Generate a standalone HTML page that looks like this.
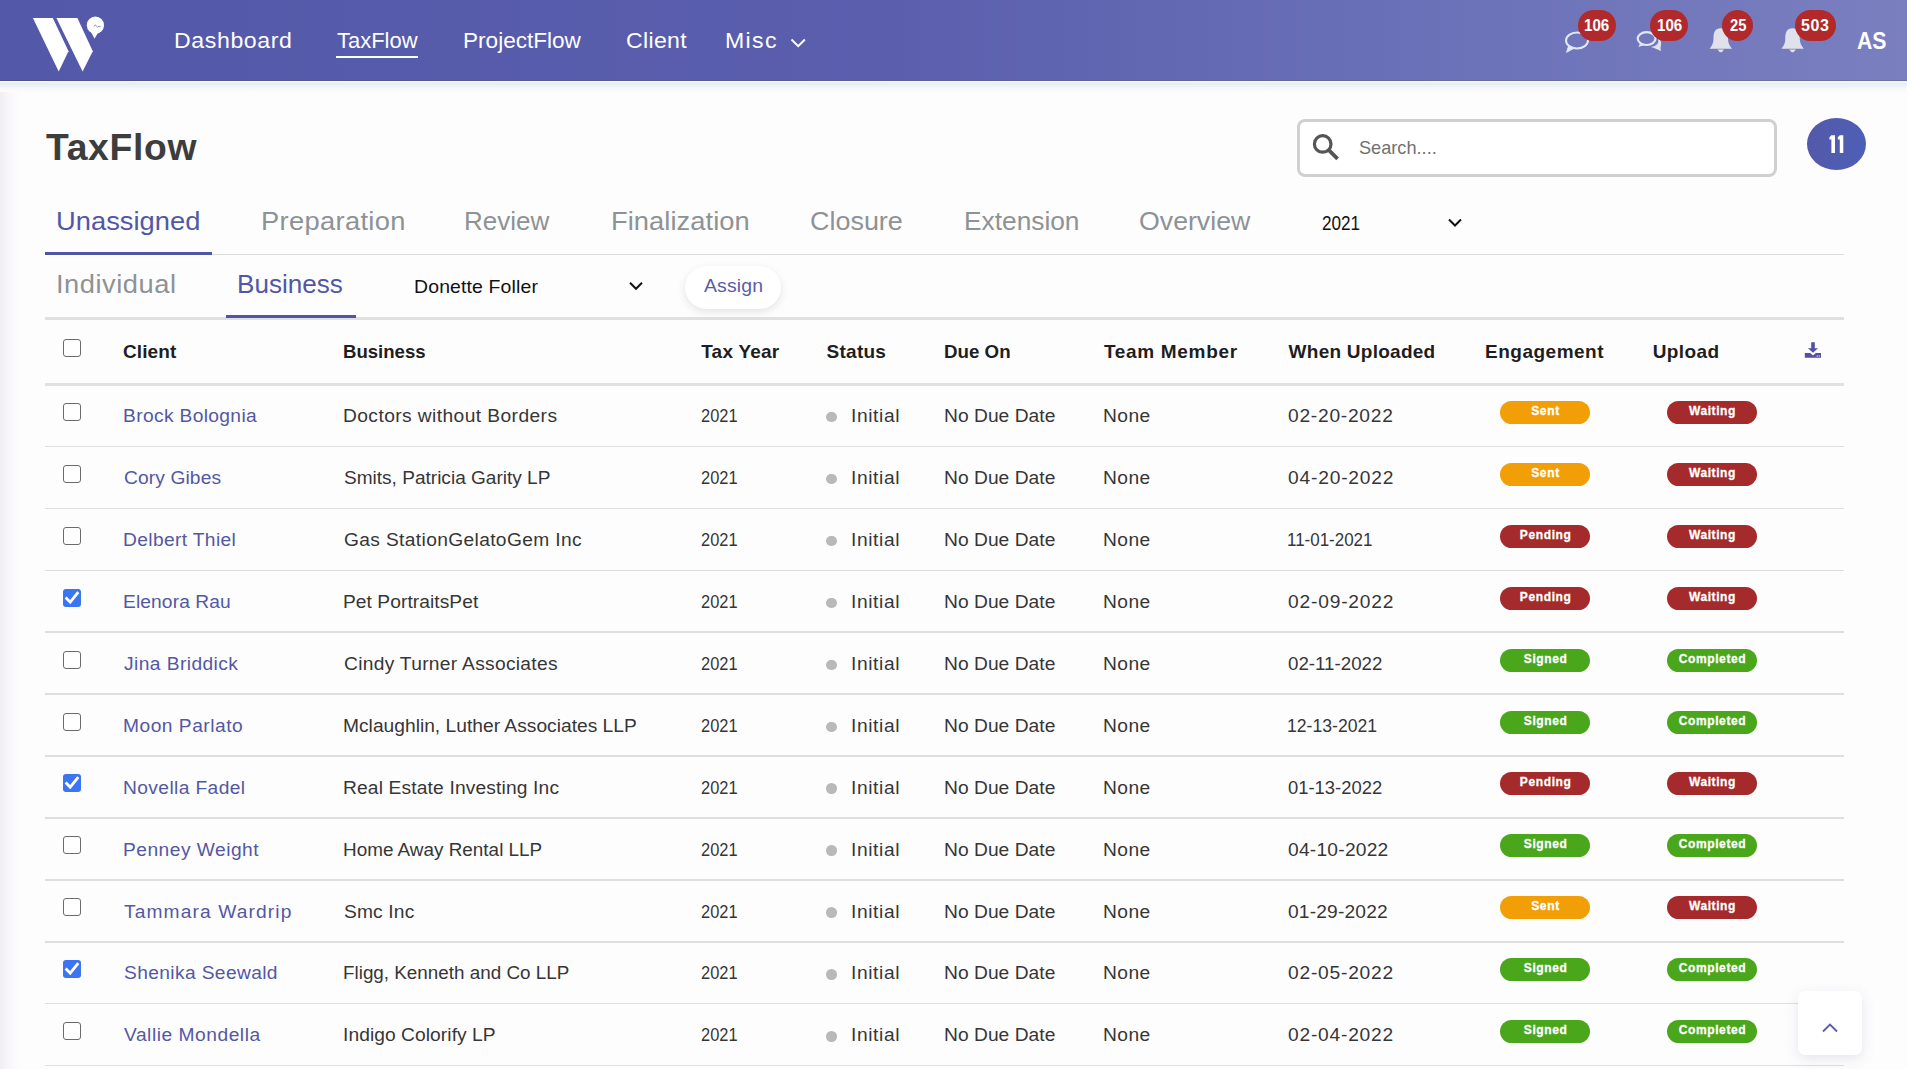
<!DOCTYPE html><html><head><meta charset="utf-8"><style>
*{margin:0;padding:0;box-sizing:border-box}
html,body{width:1907px;height:1069px;overflow:hidden;background:#fefdfe;font-family:"Liberation Sans",sans-serif;position:relative}
.t{position:absolute;white-space:nowrap;font-family:"Liberation Sans",sans-serif}
.abs{position:absolute}
#nav{position:absolute;left:0;top:0;width:1907px;height:81px;background:linear-gradient(to right,#5358a8 0%,#5a5ead 46%,#6a70b7 73%,#7a7fc0 100%)}
#navsh{position:absolute;left:0;top:81px;width:1907px;height:11px;background:linear-gradient(to bottom,#f6fbfb 0px,#e7efeb 2.5px,#eef3f9 5px,#f6f7f9 7.5px,#fefdfe 11px)}
#navln{position:absolute;left:0;top:80px;width:1907px;height:1px;background:linear-gradient(to right,#4f528c,#5d6097 50%,#6f739f)}
#leftsh{position:absolute;left:0;top:92px;width:20px;height:977px;background:linear-gradient(to right,#f1eff3,#f8f6f9 45%,#fefdfe)}
.badge{position:absolute;width:90px;height:23px;border-radius:12px}
.nb{position:absolute;height:31px;top:9.9px;border-radius:16px;background:#b1292b}
.cb{position:absolute;width:18px;height:18px;border:1.6px solid #6b6b6b;border-radius:3px;background:#fff}
.cbk{position:absolute;width:18px;height:18px;border-radius:3px;background:#3b75f2}
.cbk svg{position:absolute;left:0;top:0}
.dot{position:absolute;width:10.5px;height:10.5px;border-radius:50%;background:#b9b9bb}
.rl{position:absolute;left:45px;width:1799px;height:1.4px;background:#dedee0}
</style></head><body>
<div id="leftsh"></div><div id="nav"></div><div id="navln"></div><div id="navsh"></div>
<svg class="abs" style="left:0;top:0" width="120" height="81" viewBox="0 0 120 81">
<path d="M32.9 17.9 L52.8 17.9 L68.5 51.3 L58.7 71.6 Z" fill="#fff"/>
<path d="M56.4 17.9 L77.4 17.9 L92.8 51.3 L82.6 71.6 Z" fill="#fff"/>
<circle cx="95.4" cy="25.2" r="8.6" fill="#fff"/>
<path d="M90 30 L94.5 38.8 L99 31 Z" fill="#fff"/>
<path d="M94 26.5 q1.2 -3 2.4 -0.5 q1 2 2.5 0.4 l1.8 0" fill="none" stroke="#5358a9" stroke-width="0.7"/>
</svg>
<div class="abs" style="left:336px;top:56px;width:82px;height:2.2px;background:#fff"></div>
<svg class="abs" style="left:788px;top:36px" width="20" height="14" viewBox="0 0 20 14"><path d="M3.5 3.5 L10.2 10.2 L16.9 3.5" fill="none" stroke="#fff" stroke-width="2"/></svg>
<svg class="abs" style="left:1560px;top:25px" width="110" height="32" viewBox="0 0 110 32">
<ellipse cx="17" cy="15.5" rx="11" ry="8" fill="none" stroke="#e3e8f6" stroke-width="2"/>
<path d="M8.8 20.5 L6.6 27.3 L13.8 23.3" fill="#e3e8f6" stroke="#e3e8f6" stroke-width="1"/>
<ellipse cx="86.6" cy="13.6" rx="8.9" ry="6.4" fill="none" stroke="#e3e8f6" stroke-width="2.2"/>
<path d="M80.5 17.5 L78.4 22 L84.5 20" fill="#e3e8f6"/>
<path d="M91 22 Q100 21 98 13 Q102 16 101 20 L100.5 23 L101 26 L94 23 Z" fill="#dfe3ec"/>
</svg>
<svg class="abs" style="left:1700px;top:20px" width="120" height="40" viewBox="0 0 120 40">
<path d="M20.8 8.3 C14 8.3 13.5 14 13.5 19 C13.5 23 12 25.5 9.6 28.8 L32 28.8 C29.6 25.5 28 23 28 19 C28 14 27.5 8.3 20.8 8.3 Z" fill="#dfe2ea"/>
<path d="M17.5 29.5 Q20.8 35 24 29.5 Z" fill="#dfe2ea"/>
<path d="M92.6 8.3 C85.8 8.3 85.3 14 85.3 19 C85.3 23 83.8 25.5 81.4 28.8 L103.8 28.8 C101.4 25.5 99.8 23 99.8 19 C99.8 14 99.3 8.3 92.6 8.3 Z" fill="#dfe2ea"/>
<path d="M89.3 29.5 Q92.6 35 95.8 29.5 Z" fill="#dfe2ea"/>
</svg>
<div class="nb" style="left:1577.8px;width:38px"></div>
<div class="nb" style="left:1650.4px;width:37.5px"></div>
<div class="nb" style="left:1722.3px;width:30.5px"></div>
<div class="nb" style="left:1794.5px;width:41.2px"></div>
<div class="abs" style="left:1297px;top:119px;width:480px;height:58px;border:3px solid #d0d0d4;border-radius:8px;background:#fff"></div>
<svg class="abs" style="left:1305px;top:126px" width="44" height="44" viewBox="0 0 44 44"><circle cx="17.7" cy="17.9" r="8.3" fill="none" stroke="#555" stroke-width="3.2"/><path d="M23.6 23.8 L32.6 32.8" stroke="#555" stroke-width="3.8" stroke-linecap="butt"/></svg>
<div class="abs" style="left:1807px;top:118px;width:59px;height:52px;border-radius:50%;background:linear-gradient(to right,#5459a9,#4d5fb6)"></div>
<div class="abs" style="left:45px;top:254px;width:1799px;height:1.2px;background:#dcdcdf"></div>
<div class="abs" style="left:45px;top:252px;width:167px;height:3px;background:#4f55a3"></div>
<svg class="abs" style="left:1444px;top:215px" width="22" height="16" viewBox="0 0 22 16"><path d="M5 4.5 L11 10.5 L17 4.5" fill="none" stroke="#111" stroke-width="2"/></svg>
<div class="abs" style="left:45px;top:317px;width:1799px;height:2.5px;background:#e0e0e2"></div>
<div class="abs" style="left:226px;top:315px;width:130px;height:3px;background:#5055a4"></div>
<svg class="abs" style="left:626px;top:279px" width="20" height="14" viewBox="0 0 20 14"><path d="M4 3.8 L10 9.8 L16 3.8" fill="none" stroke="#111" stroke-width="2"/></svg>
<div class="abs" style="left:685px;top:265.5px;width:96px;height:43px;border-radius:22px;background:#fff;box-shadow:0 3px 8px rgba(0,0,0,0.10)"></div>
<div class="cb" style="left:63px;top:339.3px"></div>
<svg class="abs" style="left:1795px;top:335px" width="35" height="30" viewBox="0 0 35 30"><path d="M16.2 7.3 H19.8 V13.3 H23 L18 17.8 L12.9 13.3 H16.2 Z" fill="#5350a6"/><path d="M9.8 18.1 H15.2 L18 20.4 L20.8 18.1 H26 V22.8 H9.8 Z" fill="#5350a6"/><circle cx="22.3" cy="21" r="0.8" fill="#c9c8f2"/><circle cx="24.3" cy="21" r="0.8" fill="#c9c8f2"/></svg>
<div class="abs" style="left:45px;top:383.3px;width:1799px;height:3px;background:#e1e1e3"></div>
<div class="cb" style="left:63px;top:402.90px"></div>
<div class="dot" style="left:826px;top:411.90px"></div>
<div class="rl" style="top:445.70px"></div>
<div class="cb" style="left:63px;top:464.83px"></div>
<div class="dot" style="left:826px;top:473.83px"></div>
<div class="rl" style="top:507.63px"></div>
<div class="cb" style="left:63px;top:526.76px"></div>
<div class="dot" style="left:826px;top:535.76px"></div>
<div class="rl" style="top:569.56px"></div>
<div class="cbk" style="left:63px;top:588.69px"><svg width="18" height="18" viewBox="0 0 18 18"><path d="M3.6 9.6 L7.2 13.2 L14.4 4.2" fill="none" stroke="#fff" stroke-width="2.8" stroke-linecap="square"/></svg></div>
<div class="dot" style="left:826px;top:597.69px"></div>
<div class="rl" style="top:631.49px"></div>
<div class="cb" style="left:63px;top:650.62px"></div>
<div class="dot" style="left:826px;top:659.62px"></div>
<div class="rl" style="top:693.42px"></div>
<div class="cb" style="left:63px;top:712.55px"></div>
<div class="dot" style="left:826px;top:721.55px"></div>
<div class="rl" style="top:755.35px"></div>
<div class="cbk" style="left:63px;top:774.48px"><svg width="18" height="18" viewBox="0 0 18 18"><path d="M3.6 9.6 L7.2 13.2 L14.4 4.2" fill="none" stroke="#fff" stroke-width="2.8" stroke-linecap="square"/></svg></div>
<div class="dot" style="left:826px;top:783.48px"></div>
<div class="rl" style="top:817.28px"></div>
<div class="cb" style="left:63px;top:836.41px"></div>
<div class="dot" style="left:826px;top:845.41px"></div>
<div class="rl" style="top:879.21px"></div>
<div class="cb" style="left:63px;top:898.34px"></div>
<div class="dot" style="left:826px;top:907.34px"></div>
<div class="rl" style="top:941.14px"></div>
<div class="cbk" style="left:63px;top:960.27px"><svg width="18" height="18" viewBox="0 0 18 18"><path d="M3.6 9.6 L7.2 13.2 L14.4 4.2" fill="none" stroke="#fff" stroke-width="2.8" stroke-linecap="square"/></svg></div>
<div class="dot" style="left:826px;top:969.27px"></div>
<div class="rl" style="top:1003.07px"></div>
<div class="cb" style="left:63px;top:1022.20px"></div>
<div class="dot" style="left:826px;top:1031.20px"></div>
<div class="rl" style="top:1065.00px"></div>
<div class="t" style="left:173.85px;top:29.90px;font-size:22px;line-height:22px;font-weight:400;color:#fff;letter-spacing:0.588px;transform:scaleX(1.05);transform-origin:0 0">Dashboard</div>
<div class="t" style="left:337.00px;top:29.90px;font-size:22px;line-height:22px;font-weight:400;color:#fff;letter-spacing:0.000px;transform:scaleX(0.9988010056081994);transform-origin:0 0">TaxFlow</div>
<div class="t" style="left:463.47px;top:29.90px;font-size:22px;line-height:22px;font-weight:400;color:#fff;letter-spacing:0.000px;transform:scaleX(1.0260257431338797);transform-origin:0 0">ProjectFlow</div>
<div class="t" style="left:626.45px;top:29.90px;font-size:22px;line-height:22px;font-weight:400;color:#fff;letter-spacing:0.307px;transform:scaleX(1.05);transform-origin:0 0">Client</div>
<div class="t" style="left:725.45px;top:29.90px;font-size:22px;line-height:22px;font-weight:400;color:#fff;letter-spacing:1.294px;transform:scaleX(1.05);transform-origin:0 0">Misc</div>
<div class="t" style="left:1857.00px;top:30.00px;font-size:23px;line-height:23px;font-weight:700;color:#fff;letter-spacing:0.000px;transform:scaleX(0.92376229976675);transform-origin:0 0">AS</div>
<div class="t" style="left:1584.05px;top:17.90px;font-size:16px;line-height:16px;font-weight:700;color:#fff;letter-spacing:0.000px;transform:scaleX(0.94585099939431);transform-origin:0 0">106</div>
<div class="t" style="left:1656.55px;top:17.90px;font-size:16px;line-height:16px;font-weight:700;color:#fff;letter-spacing:0.000px;transform:scaleX(0.94585099939431);transform-origin:0 0">106</div>
<div class="t" style="left:1729.50px;top:17.90px;font-size:16px;line-height:16px;font-weight:700;color:#fff;letter-spacing:0.000px;transform:scaleX(0.9218681798341336);transform-origin:0 0">25</div>
<div class="t" style="left:1801.00px;top:17.90px;font-size:16px;line-height:16px;font-weight:700;color:#fff;letter-spacing:0.602px">503</div>
<div class="t" style="left:46.00px;top:129.00px;font-size:37.3px;line-height:37.3px;font-weight:600;color:#3d3d3d;letter-spacing:0.679px">TaxFlow</div>
<div class="t" style="left:1358.50px;top:137.80px;font-size:19px;line-height:19px;font-weight:400;color:#717171;letter-spacing:0.000px;transform:scaleX(0.9558066326655116);transform-origin:0 0">Search....</div>
<div class="t" style="left:56.20px;top:208.30px;font-size:26px;line-height:26px;font-weight:400;color:#5257a5;letter-spacing:0.016px;transform:scaleX(1.05);transform-origin:0 0">Unassigned</div>
<div class="t" style="left:260.60px;top:208.30px;font-size:26px;line-height:26px;font-weight:400;color:#8d9295;letter-spacing:0.314px;transform:scaleX(1.05);transform-origin:0 0">Preparation</div>
<div class="t" style="left:464.40px;top:208.30px;font-size:26px;line-height:26px;font-weight:400;color:#8d9295;letter-spacing:-0.000px;transform:scaleX(1.0015255744302498);transform-origin:0 0">Review</div>
<div class="t" style="left:611.10px;top:208.30px;font-size:26px;line-height:26px;font-weight:400;color:#8d9295;letter-spacing:0.056px;transform:scaleX(1.05);transform-origin:0 0">Finalization</div>
<div class="t" style="left:810.26px;top:208.30px;font-size:26px;line-height:26px;font-weight:400;color:#8d9295;letter-spacing:0.000px;transform:scaleX(1.0359594885091867);transform-origin:0 0">Closure</div>
<div class="t" style="left:963.98px;top:208.30px;font-size:26px;line-height:26px;font-weight:400;color:#8d9295;letter-spacing:-0.000px;transform:scaleX(1.011545347903933);transform-origin:0 0">Extension</div>
<div class="t" style="left:1139.47px;top:208.30px;font-size:26px;line-height:26px;font-weight:400;color:#8d9295;letter-spacing:-0.000px;transform:scaleX(1.0271604938271606);transform-origin:0 0">Overview</div>
<div class="t" style="left:1322.30px;top:214.40px;font-size:19.5px;line-height:19.5px;font-weight:400;color:#111;letter-spacing:-0.012px;transform:scaleX(0.88);transform-origin:0 0">2021</div>
<div class="t" style="left:55.80px;top:270.80px;font-size:26px;line-height:26px;font-weight:400;color:#8d9295;letter-spacing:0.494px;transform:scaleX(1.05);transform-origin:0 0">Individual</div>
<div class="t" style="left:237.19px;top:270.80px;font-size:26px;line-height:26px;font-weight:400;color:#5257a5;letter-spacing:0.000px;transform:scaleX(1.0029174765526223);transform-origin:0 0">Business</div>
<div class="t" style="left:413.65px;top:278.00px;font-size:18.5px;line-height:18.5px;font-weight:400;color:#111;letter-spacing:0.140px;transform:scaleX(1.05);transform-origin:0 0">Donette Foller</div>
<div class="t" style="left:704.10px;top:277.00px;font-size:18.5px;line-height:18.5px;font-weight:400;color:#5a5ca6;letter-spacing:0.133px;transform:scaleX(1.05);transform-origin:0 0">Assign</div>
<div class="t" style="left:123.00px;top:342.10px;font-size:19px;line-height:19px;font-weight:700;color:#1e1e1e;letter-spacing:0.090px">Client</div>
<div class="t" style="left:343.32px;top:342.10px;font-size:19px;line-height:19px;font-weight:700;color:#1e1e1e;letter-spacing:0.000px;transform:scaleX(0.9781384529313032);transform-origin:0 0">Business</div>
<div class="t" style="left:701.20px;top:342.10px;font-size:19px;line-height:19px;font-weight:700;color:#1e1e1e;letter-spacing:0.233px">Tax Year</div>
<div class="t" style="left:826.60px;top:342.10px;font-size:19px;line-height:19px;font-weight:700;color:#1e1e1e;letter-spacing:0.240px">Status</div>
<div class="t" style="left:944.01px;top:342.10px;font-size:19px;line-height:19px;font-weight:700;color:#1e1e1e;letter-spacing:0.000px;transform:scaleX(0.9855703381234776);transform-origin:0 0">Due On</div>
<div class="t" style="left:1104.00px;top:342.10px;font-size:19px;line-height:19px;font-weight:700;color:#1e1e1e;letter-spacing:0.674px">Team Member</div>
<div class="t" style="left:1288.60px;top:342.10px;font-size:19px;line-height:19px;font-weight:700;color:#1e1e1e;letter-spacing:0.255px">When Uploaded</div>
<div class="t" style="left:1485.00px;top:342.10px;font-size:19px;line-height:19px;font-weight:700;color:#1e1e1e;letter-spacing:0.501px">Engagement</div>
<div class="t" style="left:1652.70px;top:342.10px;font-size:19px;line-height:19px;font-weight:700;color:#1e1e1e;letter-spacing:0.424px">Upload</div>
<div class="t" style="left:122.55px;top:407.10px;font-size:18.3px;line-height:18.3px;font-weight:400;color:#5358a4;letter-spacing:0.335px;transform:scaleX(1.05);transform-origin:0 0">Brock Bolognia</div>
<div class="t" style="left:343.15px;top:407.10px;font-size:18.3px;line-height:18.3px;font-weight:400;color:#363636;letter-spacing:0.397px;transform:scaleX(1.05);transform-origin:0 0">Doctors without Borders</div>
<div class="t" style="left:701.20px;top:407.10px;font-size:18.3px;line-height:18.3px;font-weight:400;color:#363636;letter-spacing:0.000px;transform:scaleX(0.8987325872497691);transform-origin:0 0">2021</div>
<div class="t" style="left:851.25px;top:407.10px;font-size:18.3px;line-height:18.3px;font-weight:400;color:#363636;letter-spacing:0.580px;transform:scaleX(1.05);transform-origin:0 0">Initial</div>
<div class="t" style="left:943.85px;top:407.10px;font-size:18.3px;line-height:18.3px;font-weight:400;color:#363636;letter-spacing:0.034px;transform:scaleX(1.05);transform-origin:0 0">No Due Date</div>
<div class="t" style="left:1102.95px;top:407.10px;font-size:18.3px;line-height:18.3px;font-weight:400;color:#363636;letter-spacing:0.424px;transform:scaleX(1.05);transform-origin:0 0">None</div>
<div class="t" style="left:1288.20px;top:407.10px;font-size:18.3px;line-height:18.3px;font-weight:400;color:#363636;letter-spacing:0.708px;transform:scaleX(1.05);transform-origin:0 0">02-20-2022</div>
<div class="t" style="left:123.60px;top:469.03px;font-size:18.3px;line-height:18.3px;font-weight:400;color:#5358a4;letter-spacing:0.110px;transform:scaleX(1.05);transform-origin:0 0">Cory Gibes</div>
<div class="t" style="left:344.20px;top:469.03px;font-size:18.3px;line-height:18.3px;font-weight:400;color:#363636;letter-spacing:0.000px;transform:scaleX(1.041934943154175);transform-origin:0 0">Smits, Patricia Garity LP</div>
<div class="t" style="left:701.20px;top:469.03px;font-size:18.3px;line-height:18.3px;font-weight:400;color:#363636;letter-spacing:0.000px;transform:scaleX(0.8987325872497691);transform-origin:0 0">2021</div>
<div class="t" style="left:851.25px;top:469.03px;font-size:18.3px;line-height:18.3px;font-weight:400;color:#363636;letter-spacing:0.580px;transform:scaleX(1.05);transform-origin:0 0">Initial</div>
<div class="t" style="left:943.85px;top:469.03px;font-size:18.3px;line-height:18.3px;font-weight:400;color:#363636;letter-spacing:0.034px;transform:scaleX(1.05);transform-origin:0 0">No Due Date</div>
<div class="t" style="left:1102.95px;top:469.03px;font-size:18.3px;line-height:18.3px;font-weight:400;color:#363636;letter-spacing:0.424px;transform:scaleX(1.05);transform-origin:0 0">None</div>
<div class="t" style="left:1288.20px;top:469.03px;font-size:18.3px;line-height:18.3px;font-weight:400;color:#363636;letter-spacing:0.771px;transform:scaleX(1.05);transform-origin:0 0">04-20-2022</div>
<div class="t" style="left:122.55px;top:530.96px;font-size:18.3px;line-height:18.3px;font-weight:400;color:#5358a4;letter-spacing:0.345px;transform:scaleX(1.05);transform-origin:0 0">Delbert Thiel</div>
<div class="t" style="left:344.20px;top:530.96px;font-size:18.3px;line-height:18.3px;font-weight:400;color:#363636;letter-spacing:0.338px;transform:scaleX(1.05);transform-origin:0 0">Gas StationGelatoGem Inc</div>
<div class="t" style="left:701.20px;top:530.96px;font-size:18.3px;line-height:18.3px;font-weight:400;color:#363636;letter-spacing:0.000px;transform:scaleX(0.8987325872497691);transform-origin:0 0">2021</div>
<div class="t" style="left:851.25px;top:530.96px;font-size:18.3px;line-height:18.3px;font-weight:400;color:#363636;letter-spacing:0.580px;transform:scaleX(1.05);transform-origin:0 0">Initial</div>
<div class="t" style="left:943.85px;top:530.96px;font-size:18.3px;line-height:18.3px;font-weight:400;color:#363636;letter-spacing:0.034px;transform:scaleX(1.05);transform-origin:0 0">No Due Date</div>
<div class="t" style="left:1102.95px;top:530.96px;font-size:18.3px;line-height:18.3px;font-weight:400;color:#363636;letter-spacing:0.424px;transform:scaleX(1.05);transform-origin:0 0">None</div>
<div class="t" style="left:1287.27px;top:530.96px;font-size:18.3px;line-height:18.3px;font-weight:400;color:#363636;letter-spacing:0.000px;transform:scaleX(0.9275922915388632);transform-origin:0 0">11-01-2021</div>
<div class="t" style="left:122.55px;top:592.89px;font-size:18.3px;line-height:18.3px;font-weight:400;color:#5358a4;letter-spacing:0.102px;transform:scaleX(1.05);transform-origin:0 0">Elenora Rau</div>
<div class="t" style="left:343.15px;top:592.89px;font-size:18.3px;line-height:18.3px;font-weight:400;color:#363636;letter-spacing:0.051px;transform:scaleX(1.05);transform-origin:0 0">Pet PortraitsPet</div>
<div class="t" style="left:701.20px;top:592.89px;font-size:18.3px;line-height:18.3px;font-weight:400;color:#363636;letter-spacing:0.000px;transform:scaleX(0.8987325872497691);transform-origin:0 0">2021</div>
<div class="t" style="left:851.25px;top:592.89px;font-size:18.3px;line-height:18.3px;font-weight:400;color:#363636;letter-spacing:0.580px;transform:scaleX(1.05);transform-origin:0 0">Initial</div>
<div class="t" style="left:943.85px;top:592.89px;font-size:18.3px;line-height:18.3px;font-weight:400;color:#363636;letter-spacing:0.034px;transform:scaleX(1.05);transform-origin:0 0">No Due Date</div>
<div class="t" style="left:1102.95px;top:592.89px;font-size:18.3px;line-height:18.3px;font-weight:400;color:#363636;letter-spacing:0.424px;transform:scaleX(1.05);transform-origin:0 0">None</div>
<div class="t" style="left:1288.20px;top:592.89px;font-size:18.3px;line-height:18.3px;font-weight:400;color:#363636;letter-spacing:0.771px;transform:scaleX(1.05);transform-origin:0 0">02-09-2022</div>
<div class="t" style="left:123.60px;top:654.82px;font-size:18.3px;line-height:18.3px;font-weight:400;color:#5358a4;letter-spacing:0.403px;transform:scaleX(1.05);transform-origin:0 0">Jina Briddick</div>
<div class="t" style="left:344.20px;top:654.82px;font-size:18.3px;line-height:18.3px;font-weight:400;color:#363636;letter-spacing:0.284px;transform:scaleX(1.05);transform-origin:0 0">Cindy Turner Associates</div>
<div class="t" style="left:701.20px;top:654.82px;font-size:18.3px;line-height:18.3px;font-weight:400;color:#363636;letter-spacing:0.000px;transform:scaleX(0.8987325872497691);transform-origin:0 0">2021</div>
<div class="t" style="left:851.25px;top:654.82px;font-size:18.3px;line-height:18.3px;font-weight:400;color:#363636;letter-spacing:0.580px;transform:scaleX(1.05);transform-origin:0 0">Initial</div>
<div class="t" style="left:943.85px;top:654.82px;font-size:18.3px;line-height:18.3px;font-weight:400;color:#363636;letter-spacing:0.034px;transform:scaleX(1.05);transform-origin:0 0">No Due Date</div>
<div class="t" style="left:1102.95px;top:654.82px;font-size:18.3px;line-height:18.3px;font-weight:400;color:#363636;letter-spacing:0.424px;transform:scaleX(1.05);transform-origin:0 0">None</div>
<div class="t" style="left:1288.20px;top:654.82px;font-size:18.3px;line-height:18.3px;font-weight:400;color:#363636;letter-spacing:0.000px;transform:scaleX(1.0240438235314613);transform-origin:0 0">02-11-2022</div>
<div class="t" style="left:122.55px;top:716.75px;font-size:18.3px;line-height:18.3px;font-weight:400;color:#5358a4;letter-spacing:0.481px;transform:scaleX(1.05);transform-origin:0 0">Moon Parlato</div>
<div class="t" style="left:343.15px;top:716.75px;font-size:18.3px;line-height:18.3px;font-weight:400;color:#363636;letter-spacing:0.011px;transform:scaleX(1.05);transform-origin:0 0">Mclaughlin, Luther Associates LLP</div>
<div class="t" style="left:701.20px;top:716.75px;font-size:18.3px;line-height:18.3px;font-weight:400;color:#363636;letter-spacing:0.000px;transform:scaleX(0.8987325872497691);transform-origin:0 0">2021</div>
<div class="t" style="left:851.25px;top:716.75px;font-size:18.3px;line-height:18.3px;font-weight:400;color:#363636;letter-spacing:0.580px;transform:scaleX(1.05);transform-origin:0 0">Initial</div>
<div class="t" style="left:943.85px;top:716.75px;font-size:18.3px;line-height:18.3px;font-weight:400;color:#363636;letter-spacing:0.034px;transform:scaleX(1.05);transform-origin:0 0">No Due Date</div>
<div class="t" style="left:1102.95px;top:716.75px;font-size:18.3px;line-height:18.3px;font-weight:400;color:#363636;letter-spacing:0.424px;transform:scaleX(1.05);transform-origin:0 0">None</div>
<div class="t" style="left:1287.24px;top:716.75px;font-size:18.3px;line-height:18.3px;font-weight:400;color:#363636;letter-spacing:0.000px;transform:scaleX(0.9637696425741771);transform-origin:0 0">12-13-2021</div>
<div class="t" style="left:122.55px;top:778.68px;font-size:18.3px;line-height:18.3px;font-weight:400;color:#5358a4;letter-spacing:0.373px;transform:scaleX(1.05);transform-origin:0 0">Novella Fadel</div>
<div class="t" style="left:343.15px;top:778.68px;font-size:18.3px;line-height:18.3px;font-weight:400;color:#363636;letter-spacing:0.146px;transform:scaleX(1.05);transform-origin:0 0">Real Estate Investing Inc</div>
<div class="t" style="left:701.20px;top:778.68px;font-size:18.3px;line-height:18.3px;font-weight:400;color:#363636;letter-spacing:0.000px;transform:scaleX(0.8987325872497691);transform-origin:0 0">2021</div>
<div class="t" style="left:851.25px;top:778.68px;font-size:18.3px;line-height:18.3px;font-weight:400;color:#363636;letter-spacing:0.580px;transform:scaleX(1.05);transform-origin:0 0">Initial</div>
<div class="t" style="left:943.85px;top:778.68px;font-size:18.3px;line-height:18.3px;font-weight:400;color:#363636;letter-spacing:0.034px;transform:scaleX(1.05);transform-origin:0 0">No Due Date</div>
<div class="t" style="left:1102.95px;top:778.68px;font-size:18.3px;line-height:18.3px;font-weight:400;color:#363636;letter-spacing:0.424px;transform:scaleX(1.05);transform-origin:0 0">None</div>
<div class="t" style="left:1288.20px;top:778.68px;font-size:18.3px;line-height:18.3px;font-weight:400;color:#363636;letter-spacing:0.000px;transform:scaleX(1.0070092300701021);transform-origin:0 0">01-13-2022</div>
<div class="t" style="left:122.55px;top:840.61px;font-size:18.3px;line-height:18.3px;font-weight:400;color:#5358a4;letter-spacing:0.453px;transform:scaleX(1.05);transform-origin:0 0">Penney Weight</div>
<div class="t" style="left:343.17px;top:840.61px;font-size:18.3px;line-height:18.3px;font-weight:400;color:#363636;letter-spacing:0.000px;transform:scaleX(1.0334777930869001);transform-origin:0 0">Home Away Rental LLP</div>
<div class="t" style="left:701.20px;top:840.61px;font-size:18.3px;line-height:18.3px;font-weight:400;color:#363636;letter-spacing:0.000px;transform:scaleX(0.8987325872497691);transform-origin:0 0">2021</div>
<div class="t" style="left:851.25px;top:840.61px;font-size:18.3px;line-height:18.3px;font-weight:400;color:#363636;letter-spacing:0.580px;transform:scaleX(1.05);transform-origin:0 0">Initial</div>
<div class="t" style="left:943.85px;top:840.61px;font-size:18.3px;line-height:18.3px;font-weight:400;color:#363636;letter-spacing:0.034px;transform:scaleX(1.05);transform-origin:0 0">No Due Date</div>
<div class="t" style="left:1102.95px;top:840.61px;font-size:18.3px;line-height:18.3px;font-weight:400;color:#363636;letter-spacing:0.424px;transform:scaleX(1.05);transform-origin:0 0">None</div>
<div class="t" style="left:1288.20px;top:840.61px;font-size:18.3px;line-height:18.3px;font-weight:400;color:#363636;letter-spacing:0.221px;transform:scaleX(1.05);transform-origin:0 0">04-10-2022</div>
<div class="t" style="left:123.60px;top:902.54px;font-size:18.3px;line-height:18.3px;font-weight:400;color:#5358a4;letter-spacing:1.059px;transform:scaleX(1.05);transform-origin:0 0">Tammara Wardrip</div>
<div class="t" style="left:344.20px;top:902.54px;font-size:18.3px;line-height:18.3px;font-weight:400;color:#363636;letter-spacing:0.146px;transform:scaleX(1.05);transform-origin:0 0">Smc Inc</div>
<div class="t" style="left:701.20px;top:902.54px;font-size:18.3px;line-height:18.3px;font-weight:400;color:#363636;letter-spacing:0.000px;transform:scaleX(0.8987325872497691);transform-origin:0 0">2021</div>
<div class="t" style="left:851.25px;top:902.54px;font-size:18.3px;line-height:18.3px;font-weight:400;color:#363636;letter-spacing:0.580px;transform:scaleX(1.05);transform-origin:0 0">Initial</div>
<div class="t" style="left:943.85px;top:902.54px;font-size:18.3px;line-height:18.3px;font-weight:400;color:#363636;letter-spacing:0.034px;transform:scaleX(1.05);transform-origin:0 0">No Due Date</div>
<div class="t" style="left:1102.95px;top:902.54px;font-size:18.3px;line-height:18.3px;font-weight:400;color:#363636;letter-spacing:0.424px;transform:scaleX(1.05);transform-origin:0 0">None</div>
<div class="t" style="left:1288.20px;top:902.54px;font-size:18.3px;line-height:18.3px;font-weight:400;color:#363636;letter-spacing:0.157px;transform:scaleX(1.05);transform-origin:0 0">01-29-2022</div>
<div class="t" style="left:123.60px;top:964.47px;font-size:18.3px;line-height:18.3px;font-weight:400;color:#5358a4;letter-spacing:0.353px;transform:scaleX(1.05);transform-origin:0 0">Shenika Seewald</div>
<div class="t" style="left:343.17px;top:964.47px;font-size:18.3px;line-height:18.3px;font-weight:400;color:#363636;letter-spacing:-0.000px;transform:scaleX(1.030534519195362);transform-origin:0 0">Fligg, Kenneth and Co LLP</div>
<div class="t" style="left:701.20px;top:964.47px;font-size:18.3px;line-height:18.3px;font-weight:400;color:#363636;letter-spacing:0.000px;transform:scaleX(0.8987325872497691);transform-origin:0 0">2021</div>
<div class="t" style="left:851.25px;top:964.47px;font-size:18.3px;line-height:18.3px;font-weight:400;color:#363636;letter-spacing:0.580px;transform:scaleX(1.05);transform-origin:0 0">Initial</div>
<div class="t" style="left:943.85px;top:964.47px;font-size:18.3px;line-height:18.3px;font-weight:400;color:#363636;letter-spacing:0.034px;transform:scaleX(1.05);transform-origin:0 0">No Due Date</div>
<div class="t" style="left:1102.95px;top:964.47px;font-size:18.3px;line-height:18.3px;font-weight:400;color:#363636;letter-spacing:0.424px;transform:scaleX(1.05);transform-origin:0 0">None</div>
<div class="t" style="left:1288.20px;top:964.47px;font-size:18.3px;line-height:18.3px;font-weight:400;color:#363636;letter-spacing:0.739px;transform:scaleX(1.05);transform-origin:0 0">02-05-2022</div>
<div class="t" style="left:123.60px;top:1026.40px;font-size:18.3px;line-height:18.3px;font-weight:400;color:#5358a4;letter-spacing:0.502px;transform:scaleX(1.05);transform-origin:0 0">Vallie Mondella</div>
<div class="t" style="left:343.15px;top:1026.40px;font-size:18.3px;line-height:18.3px;font-weight:400;color:#363636;letter-spacing:0.064px;transform:scaleX(1.05);transform-origin:0 0">Indigo Colorify LP</div>
<div class="t" style="left:701.20px;top:1026.40px;font-size:18.3px;line-height:18.3px;font-weight:400;color:#363636;letter-spacing:0.000px;transform:scaleX(0.8987325872497691);transform-origin:0 0">2021</div>
<div class="t" style="left:851.25px;top:1026.40px;font-size:18.3px;line-height:18.3px;font-weight:400;color:#363636;letter-spacing:0.580px;transform:scaleX(1.05);transform-origin:0 0">Initial</div>
<div class="t" style="left:943.85px;top:1026.40px;font-size:18.3px;line-height:18.3px;font-weight:400;color:#363636;letter-spacing:0.034px;transform:scaleX(1.05);transform-origin:0 0">No Due Date</div>
<div class="t" style="left:1102.95px;top:1026.40px;font-size:18.3px;line-height:18.3px;font-weight:400;color:#363636;letter-spacing:0.424px;transform:scaleX(1.05);transform-origin:0 0">None</div>
<div class="t" style="left:1288.20px;top:1026.40px;font-size:18.3px;line-height:18.3px;font-weight:400;color:#363636;letter-spacing:0.739px;transform:scaleX(1.05);transform-origin:0 0">02-04-2022</div>
<div class="badge" style="left:1500.2px;top:400.90px;background:#f29e06"></div>
<div class="t" style="left:1531.16px;top:404.90px;font-size:12px;line-height:12px;font-weight:700;color:#fff;letter-spacing:0.694px;-webkit-text-stroke:0.3px #fff">Sent</div>
<div class="badge" style="left:1667px;top:400.90px;background:#a52a2b"></div>
<div class="t" style="left:1689.02px;top:404.90px;font-size:12px;line-height:12px;font-weight:700;color:#fff;letter-spacing:0.567px;-webkit-text-stroke:0.3px #fff">Waiting</div>
<div class="badge" style="left:1500.2px;top:462.83px;background:#f29e06"></div>
<div class="t" style="left:1531.16px;top:466.83px;font-size:12px;line-height:12px;font-weight:700;color:#fff;letter-spacing:0.694px;-webkit-text-stroke:0.3px #fff">Sent</div>
<div class="badge" style="left:1667px;top:462.83px;background:#a52a2b"></div>
<div class="t" style="left:1689.02px;top:466.83px;font-size:12px;line-height:12px;font-weight:700;color:#fff;letter-spacing:0.567px;-webkit-text-stroke:0.3px #fff">Waiting</div>
<div class="badge" style="left:1500.2px;top:524.76px;background:#a52a2b"></div>
<div class="t" style="left:1519.82px;top:528.76px;font-size:12px;line-height:12px;font-weight:700;color:#fff;letter-spacing:0.627px;-webkit-text-stroke:0.3px #fff">Pending</div>
<div class="badge" style="left:1667px;top:524.76px;background:#a52a2b"></div>
<div class="t" style="left:1689.02px;top:528.76px;font-size:12px;line-height:12px;font-weight:700;color:#fff;letter-spacing:0.567px;-webkit-text-stroke:0.3px #fff">Waiting</div>
<div class="badge" style="left:1500.2px;top:586.69px;background:#a52a2b"></div>
<div class="t" style="left:1519.82px;top:590.69px;font-size:12px;line-height:12px;font-weight:700;color:#fff;letter-spacing:0.627px;-webkit-text-stroke:0.3px #fff">Pending</div>
<div class="badge" style="left:1667px;top:586.69px;background:#a52a2b"></div>
<div class="t" style="left:1689.02px;top:590.69px;font-size:12px;line-height:12px;font-weight:700;color:#fff;letter-spacing:0.567px;-webkit-text-stroke:0.3px #fff">Waiting</div>
<div class="badge" style="left:1500.2px;top:648.62px;background:#4aa71b"></div>
<div class="t" style="left:1523.78px;top:652.62px;font-size:12px;line-height:12px;font-weight:700;color:#fff;letter-spacing:0.635px;-webkit-text-stroke:0.3px #fff">Signed</div>
<div class="badge" style="left:1667px;top:648.62px;background:#4aa71b"></div>
<div class="t" style="left:1678.70px;top:652.62px;font-size:12px;line-height:12px;font-weight:700;color:#fff;letter-spacing:0.617px;-webkit-text-stroke:0.3px #fff">Completed</div>
<div class="badge" style="left:1500.2px;top:710.55px;background:#4aa71b"></div>
<div class="t" style="left:1523.78px;top:714.55px;font-size:12px;line-height:12px;font-weight:700;color:#fff;letter-spacing:0.635px;-webkit-text-stroke:0.3px #fff">Signed</div>
<div class="badge" style="left:1667px;top:710.55px;background:#4aa71b"></div>
<div class="t" style="left:1678.70px;top:714.55px;font-size:12px;line-height:12px;font-weight:700;color:#fff;letter-spacing:0.617px;-webkit-text-stroke:0.3px #fff">Completed</div>
<div class="badge" style="left:1500.2px;top:772.48px;background:#a52a2b"></div>
<div class="t" style="left:1519.82px;top:776.48px;font-size:12px;line-height:12px;font-weight:700;color:#fff;letter-spacing:0.627px;-webkit-text-stroke:0.3px #fff">Pending</div>
<div class="badge" style="left:1667px;top:772.48px;background:#a52a2b"></div>
<div class="t" style="left:1689.02px;top:776.48px;font-size:12px;line-height:12px;font-weight:700;color:#fff;letter-spacing:0.567px;-webkit-text-stroke:0.3px #fff">Waiting</div>
<div class="badge" style="left:1500.2px;top:834.41px;background:#4aa71b"></div>
<div class="t" style="left:1523.78px;top:838.41px;font-size:12px;line-height:12px;font-weight:700;color:#fff;letter-spacing:0.635px;-webkit-text-stroke:0.3px #fff">Signed</div>
<div class="badge" style="left:1667px;top:834.41px;background:#4aa71b"></div>
<div class="t" style="left:1678.70px;top:838.41px;font-size:12px;line-height:12px;font-weight:700;color:#fff;letter-spacing:0.617px;-webkit-text-stroke:0.3px #fff">Completed</div>
<div class="badge" style="left:1500.2px;top:896.34px;background:#f29e06"></div>
<div class="t" style="left:1531.16px;top:900.34px;font-size:12px;line-height:12px;font-weight:700;color:#fff;letter-spacing:0.694px;-webkit-text-stroke:0.3px #fff">Sent</div>
<div class="badge" style="left:1667px;top:896.34px;background:#a52a2b"></div>
<div class="t" style="left:1689.02px;top:900.34px;font-size:12px;line-height:12px;font-weight:700;color:#fff;letter-spacing:0.567px;-webkit-text-stroke:0.3px #fff">Waiting</div>
<div class="badge" style="left:1500.2px;top:958.27px;background:#4aa71b"></div>
<div class="t" style="left:1523.78px;top:962.27px;font-size:12px;line-height:12px;font-weight:700;color:#fff;letter-spacing:0.635px;-webkit-text-stroke:0.3px #fff">Signed</div>
<div class="badge" style="left:1667px;top:958.27px;background:#4aa71b"></div>
<div class="t" style="left:1678.70px;top:962.27px;font-size:12px;line-height:12px;font-weight:700;color:#fff;letter-spacing:0.617px;-webkit-text-stroke:0.3px #fff">Completed</div>
<div class="badge" style="left:1500.2px;top:1020.20px;background:#4aa71b"></div>
<div class="t" style="left:1523.78px;top:1024.20px;font-size:12px;line-height:12px;font-weight:700;color:#fff;letter-spacing:0.635px;-webkit-text-stroke:0.3px #fff">Signed</div>
<div class="badge" style="left:1667px;top:1020.20px;background:#4aa71b"></div>
<div class="t" style="left:1678.70px;top:1024.20px;font-size:12px;line-height:12px;font-weight:700;color:#fff;letter-spacing:0.617px;-webkit-text-stroke:0.3px #fff">Completed</div>
<svg class="abs" style="left:1820px;top:130px" width="30" height="30" viewBox="0 0 30 30"><path d="M9.4 7.2 L11.4 5.2 L15 5.2 L15 23.1 L11.4 23.1 L11.4 9.6 L9.4 9.6 Z" fill="#fff"/><path d="M17.8 7.2 L19.8 5.2 L23.3 5.2 L23.3 23.1 L19.8 23.1 L19.8 9.6 L17.8 9.6 Z" fill="#fff"/></svg>
<div class="abs" style="left:1798px;top:991px;width:64px;height:64px;border-radius:7px;background:#fff;box-shadow:0 4px 14px rgba(60,60,90,0.13)"></div>
<svg class="abs" style="left:1818px;top:1018px" width="24" height="18" viewBox="0 0 24 18"><path d="M5 13.5 L12 6.5 L19 13.5" fill="none" stroke="#5a5aa8" stroke-width="1.8"/></svg>
</body></html>
